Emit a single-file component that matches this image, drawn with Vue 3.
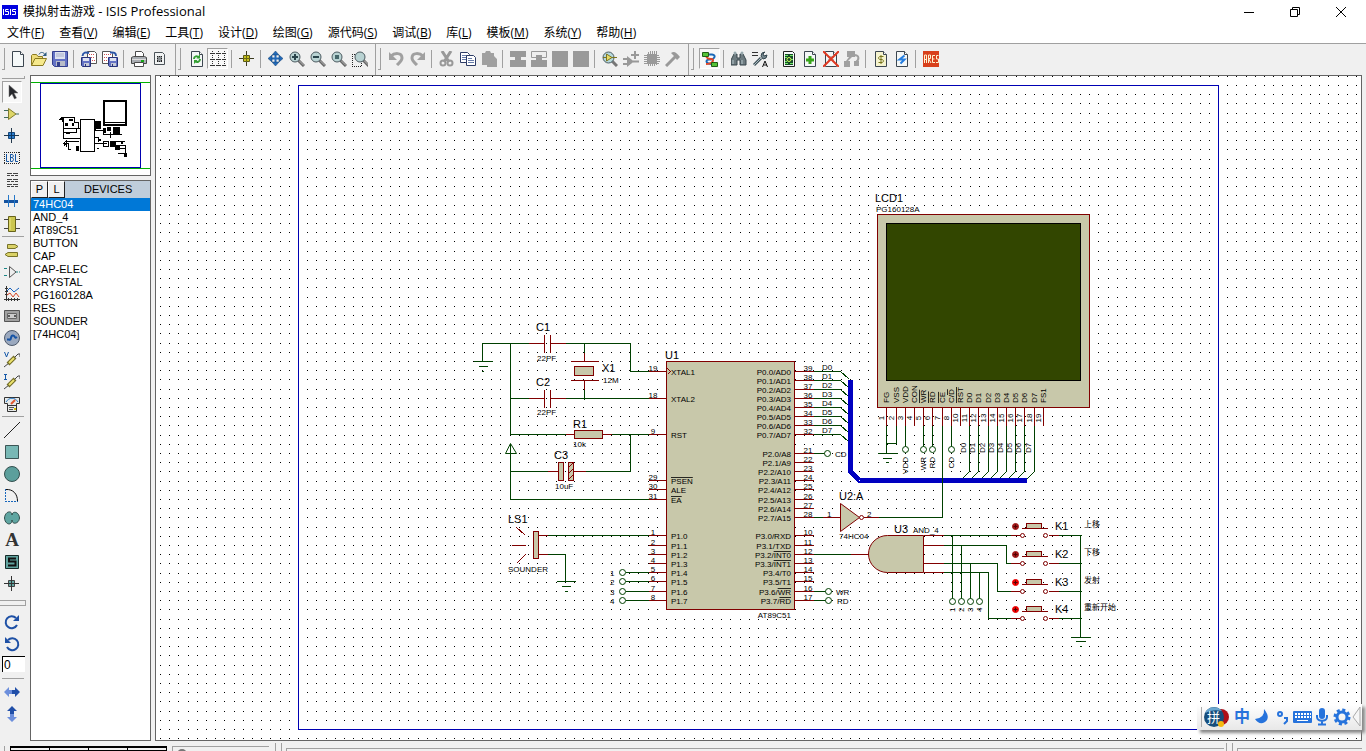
<script setup>
import { ref } from 'vue'

const menus = [
  ['文件', 'F'], ['查看', 'V'], ['编辑', 'E'], ['工具', 'T'], ['设计', 'D'], ['绘图', 'G'],
  ['源代码', 'S'], ['调试', 'B'], ['库', 'L'], ['模板', 'M'], ['系统', 'Y'], ['帮助', 'H'],
]

const lens = (inner) =>
  `<path d="M9.500 9.500L15 15" stroke="#666" stroke-width="3"/><path d="M10 9.500L15 14.500" stroke="#bbb"/><circle cx="6" cy="6" r="5" fill="#b9d3d3" stroke="#4b5a60"/>${inner}`
const sheet = (inner, fill = '#f4f7f7') =>
  `<path d="M2.500.5H10.500L13.500 3.500V15.500H2.500Z" fill="${fill}" stroke="#3c4650"/><path d="M10.500.5V3.500H13.500" fill="#fff" stroke="#3c4650"/>${inner}`
const floppy = (x, y) =>
  `<g transform="translate(${x} ${y})"><path d="M.5.5H9.500V9.500H1.500L.5 8.500Z" fill="#6472c4" stroke="#27327a"/><path d="M2 1H8V4H2Z" fill="#dfe3f2"/><path d="M3 6H8V9H3Z" fill="#c6cad8"/><path d="M4 7H5V9H4Z" fill="#27327a"/></g>`

const icons = {
  new: '<path d="M2.500.5H10.500L13.500 3.500V15.500H2.500Z" fill="#f5f9f9" stroke="#3c4650"/><path d="M10.500.5V3.500H13.500" fill="#fff" stroke="#3c4650"/>',
  open: '<path d="M.5 14.500V4.500L1.500 3.500H5.500L7 5.500H11.500V7.500" fill="#eedc7a" stroke="#8b7a20"/><path d="M.5 14.500L4 7.500H15.500L12 14.500Z" fill="#f6e98c" stroke="#8b7a20"/><path d="M8 3.500C9 1 12 .5 14 3.500" fill="none" stroke="#2c5a80"/><path d="M15.500 1V5H11.500Z" fill="#2c5a80"/>',
  save: '<path d="M.5.5H15.500V15.500H2.500L.5 13.500Z" fill="#6472c4" stroke="#343f8c"/><path d="M3 1H13V8H3Z" fill="#dde2ee"/><path d="M4 3H12M4 5H12" stroke="#a7aecb"/><path d="M4 10H13V15H4Z" fill="#b8bcc8"/><path d="M5 11H8V15H5Z" fill="#343f8c"/>',
  imp: '<path d="M6.500.5H13.500L15.500 2.500V12.500H6.500Z" fill="#fff" stroke="#555"/><path d="M8 3.500H14M8 6.500H14M11 9.500H14" stroke="#d05050" stroke-dasharray="1 1"/><path d="M1.500 5C2 1 5 1 8 2" stroke="#2b55a8" fill="none" stroke-width="2"/>' + floppy(0, 6),
  exp: '<path d="M.5.5H8.500L10.500 2.500V12.500H.5Z" fill="#fff" stroke="#555"/><path d="M2 3.500H9M2 6.500H6M2 9.500H5" stroke="#d05050" stroke-dasharray="1 1"/><path d="M8 1.500C12 1 14 2 14 5" stroke="#2b55a8" fill="none" stroke-width="2"/>' + floppy(6, 6),
  print: '<path d="M4.500 6V.5H10.500L12.500 2.500V6" fill="#fff" stroke="#4a4a4a"/><path d="M.5 6.500L2.500 5.500H13.500L15.500 6.500V12.500H.5Z" fill="#a9adb2" stroke="#4a4a4a"/><path d="M1 8.500H15" stroke="#ddd"/><path d="M3.500 11.500H12.500V15.500H3.500Z" fill="#fff" stroke="#4a4a4a"/><path d="M10 9H13V11H10Z" fill="#15a515"/>',
  area: '<path d="M2.500 1.500H10.500L12.500 3.500V13.500H2.500Z" fill="#f1f3f3" stroke="#4b5258"/><path d="M5 5H10V11H5Z" fill="#8b9094"/><path d="M5 5.500H10M5 10.500H10M5.500 5V11M9.500 5V11" stroke="#222" stroke-dasharray="1 1"/>',
  refresh: sheet('<path d="M5 8C5 5 8 4.500 10 6.500M11 8C11 11 8 12 6 10" fill="none" stroke="#35a035" stroke-width="2"/><path d="M11 3V7.500H7.500ZM5 13V9H8.500Z" fill="#35a035"/>'),
  grid: '<path d="M0 2.500H16M0 8.500H16M0 14.500H16M2.500 0V16M8.500 0V16M14.500 0V16" stroke="#333" stroke-dasharray="1 1"/><path d="M1 2.500H4M7 2.500H10M13 2.500H16M1 8.500H4M7 8.500H10M13 8.500H16M1 14.500H4M7 14.500H10M13 14.500H16" stroke="#333"/>',
  origin: '<path d="M7.500 0V15M0 7.500H15" stroke="#3b3b20"/><path d="M4.500 4.500H10.500V10.500H4.500Z" fill="#c8c31c" stroke="#5b5a17"/><path d="M7.500 4V11M4 7.500H11" stroke="#6d6a13"/>',
  pan: '<path d="M7.500 2V13M2 7.500H13" stroke="#2269b8" stroke-width="2"/><path d="M7.500 0L11 4H4ZM7.500 15L11 11H4ZM0 7.500L4 4V11ZM15 7.500L11 4V11Z" fill="#2269b8" stroke="#17406f" stroke-width=".5"/>',
  zin: lens('<path d="M3 6H9M6 3V9" stroke="#29444b" stroke-width="2"/>'),
  zout: lens('<path d="M3 6H9" stroke="#29444b" stroke-width="2"/>'),
  zall: lens('<path d="M4 4H8V8H4Z" fill="#45676b"/>'),
  zarea: '<path d="M0 3.500H8M.5 3V16M0 15.500H10M9.500 10V16" fill="none" stroke="#222" stroke-dasharray="1 1"/><g transform="translate(2)">' + lens('') + '</g>',
  undo: '<path d="M2 5C5 2 13 1 13 7C13 10 10 12 8 14" fill="none" stroke="#a0a0a0" stroke-width="3"/><path d="M0 1V9H8Z" fill="#a0a0a0"/>',
  redo: '<path d="M13 5C10 2 2 1 2 7C2 10 5 12 7 14" fill="none" stroke="#a0a0a0" stroke-width="3"/><path d="M15 1V9H7Z" fill="#a0a0a0"/>',
  cut: '<path d="M3 0L10 11M12 0L5 11" stroke="#999" stroke-width="3"/><circle cx="4" cy="12" r="2.500" fill="none" stroke="#999" stroke-width="2"/><circle cx="11" cy="12" r="2.500" fill="none" stroke="#999" stroke-width="2"/>',
  copy: '<path d="M.5 1.500H7.500L9.500 3.500V11.500H.5Z" fill="#fff" stroke="#2d3c66"/><path d="M2 4.500H8M2 6.500H8M2 8.500H6" stroke="#667ba9"/><path d="M6.500 4.500H13.500L15.500 6.500V14.500H6.500Z" fill="#fff" stroke="#2d3c66"/><path d="M8 7.500H12M8 9.500H14M8 11.500H14" stroke="#667ba9"/>',
  paste: '<path d="M1 2H4L5 0H9L10 2H13V5L16 8V16H6V14H1Z" fill="#a0a0a0"/>',
  bcopy: '<path d="M0 0H16V6H11V9H16V16H0V9H5V6H0Z" fill="#999"/>',
  bmove: '<path d="M.5.5H15.500V6.500H.5Z" fill="#eee" stroke="#999"/><path d="M5 4H11V9H16V16H0V9H5Z" fill="#999"/>',
  brot: '<path d="M0 0H16V16H0Z" fill="#999"/>',
  bdel: '<path d="M0 0H16V16H0Z" fill="#999"/>',
  pick: '<path d="M10 10L15 15" stroke="#777" stroke-width="3"/><circle cx="6.500" cy="6.500" r="5.500" fill="#b5d8dc" stroke="#4b5a60"/><path d="M4.500 3V10L10 6.500Z" fill="#e8dc64" stroke="#7b7422"/><path d="M1 6.500H4M10 6.500H15" stroke="#7b7422"/>',
  make: '<path d="M4 5V16L11 10.500Z" fill="#999"/><path d="M0 8H5M0 13H5M10 10.500H16M12 0V8M8 4H16" stroke="#999" stroke-width="2"/>',
  pkg: '<path d="M3 3H13V13H3Z" fill="#999"/><path d="M4.500 1V15M6.500 0V15M8.500 0V15M10.500 0V15M12.500 0V14M0 4.500H15M0 6.500H16M0 8.500H16M0 10.500H16M0 12.500H15" stroke="#999"/>',
  decomp: '<path d="M1 15L11 5" stroke="#999" stroke-width="3"/><path d="M6 2C9 0 11 1 15 6L12 9L9 5Z" fill="#999"/>',
  wire: '<path d="M1 3.500H10C15 4 12 9 8 8.500C3 8 3 13 10 13" fill="none" stroke="#1868b8" stroke-width="2"/><path d="M7 3C2 5 5 8 9 8C13 8 11 13 4 13" fill="none" stroke="#e24828" stroke-width="2"/><path d="M.5 1.500H6.500V5.500H.5ZM9.500 11.500H15.500V15.500H9.500Z" fill="#55c338" stroke="#215e16"/>',
  find: '<path d="M3 3H6V7H9V3H12L15 9V14H9V9H6V14H0V9Z" fill="#6d7b80" stroke="#36454a"/><path d="M3 1H5V3H3ZM10 1H12V3H10ZM2 9V13M11 9V13" fill="#36454a" stroke="#b7c8cc"/>',
  prop: '<path d="M0 1.500H6M0 4.500H6" stroke="#333"/><path d="M2 14L9 7" stroke="#42555d" stroke-width="3"/><path d="M2 14L9 7" stroke="#aebdc3"/><path d="M13 1L10 2L9 5L11 8L14 7L15 4L12 5L11 3Z" fill="#778a92" stroke="#34464e"/><path d="M10.500 16L13 10L15.500 16M11.500 14H15" fill="none" stroke="#111"/>',
  design: '<path d="M2.500.5H11.500L13.500 2.500V15.500H2.500Z" fill="#f4f7f7" stroke="#222"/><path d="M4 3H12V14H4Z" fill="#174b28"/><path d="M4 4.500H7M9 4.500H12M4 6.500H6M10 8.500H12M4 10.500H6M9 12.500H12M4 12.500H7" stroke="#6fe565"/><circle cx="8" cy="8.500" r="2" fill="none" stroke="#d4ff58"/>',
  add: sheet('<path d="M8 5V13M4 9H12" stroke="#36a318" stroke-width="3"/>'),
  del: sheet('<path d="M5 6H11M5 9H11" stroke="#777"/><path d="M0 0L16 16M16 0L0 16" stroke="#df3922" stroke-width="2"/>'),
  exit: '<path d="M3 0H11V6H8L4 10H6V16H0V10H2L5 6H3ZM10 10H15V15H10Z" fill="#a0a0a0"/><path d="M10 4C16 4 15 9 12 11" fill="none" stroke="#a0a0a0" stroke-width="2"/>',
  bom: sheet('<path d="M10.500 5.500H7C5 6 5 8 7 8.500H9C11 9 11 11 9 11.500H5.500M8 4V13" fill="none" stroke="#78751c"/>', '#f5f3cf'),
  elec: sheet('<path d="M10.500 4.500L5.500 8.500H10.500L6.500 12.500" fill="none" stroke="#237de0" stroke-width="2"/>'),
  ares: '<path d="M0 0H16V16H0Z" fill="#d8401b"/><path d="M1.500 12V4H3.500V12M1 8.500H4M5.500 12V4H7.500V7.500H5.500L8 12M12 4.500H9.500V11.500H12M9 8H11.500M15.500 4.500H13.500V8H15.500V11.500H13" fill="none" stroke="#fff3d0"/>',
  select: '<path d="M5 1V13L8 10L10.500 15L12.500 14L10 9H14Z" fill="#27282d" stroke="#777" stroke-width=".5"/>',
  gate: '<path d="M0 4.500H4M0 11.500H4M12 8H15" stroke="#3f6b5d"/><path d="M4.500 2.500V13.500L12 8Z" fill="#ddd668" stroke="#807b30"/>',
  junction: '<path d="M7.500 0V15M0 7.500H15" stroke="#24394c"/><path d="M4.500 4.500H10.500V10.500H4.500Z" fill="#2b7fd0" stroke="#16477a"/><path d="M7.500 4V11M4 7.500H11" stroke="#0d3660"/>',
  label: '<path d="M0 2.500H16M0 13.500H16M.5 2V14M15.500 2V14" fill="none" stroke="#222" stroke-dasharray="1 1"/><path d="M2.500 4V11.500H5M6.500 4.500H8.500L9.500 6L8.500 7.500H6.500V4.500V11.500H8.500L9.500 9.500L8.500 7.500M11.500 4V11.500H14" fill="none" stroke="#1557a5"/>',
  script: '<path d="M3 1.500H14M3 7.500H14M3 12.500H14" stroke="#444" stroke-dasharray="5 1"/><path d="M3 3.500H14M3 9.500H14M3 14.500H14" stroke="#444" stroke-dasharray="3 1"/>',
  bus: '<path d="M0 7.500H14" stroke="#1553a0" stroke-width="3"/><path d="M4.500 1V13M10.500 1V13" stroke="#2578c9"/>',
  chip: '<path d="M0 3.500H4M0 12.500H4M12 3.500H16M12 12.500H16" stroke="#444"/><path d="M4.500.5H11.500V15.500H4.500Z" fill="#cbc650" stroke="#67631b"/><path d="M6 2V14" stroke="#eee783"/>',
  term: '<path d="M3.500 2.500H11L14 4.500L11 6.500H3.500ZM13.500 10.500H4L1 12.500L4 14.500H13.500Z" fill="#dad267" stroke="#77722a"/>',
  pin: '<path d="M0 4.500H4M0 11.500H4M11 8H16" stroke="#1a8585" stroke-dasharray="3 1"/><path d="M5.500 2.500V13.500L12 8Z" fill="#eee" stroke="#555"/>',
  graph: '<path d="M2.500 0V15M0 13.500H16M4.500 12V15M7.500 12V15M10.500 12V15M13.500 12V15M1 2.500H4M1 5.500H4M1 8.500H4" stroke="#333"/><path d="M3 5L6 2L10 6L15 2" fill="none" stroke="#1760bd"/><path d="M3 9L6 7L9 11L12 7L15 11" fill="none" stroke="#d34525"/>',
  tape: '<path d="M.5 2.500H15.500V13.500H.5Z" fill="#a1a1a1" stroke="#555"/><path d="M3.500 5.500H12.500V10.500H3.500Z" fill="#ccc" stroke="#666"/><circle cx="5" cy="8" r="1" fill="#333"/><circle cx="11" cy="8" r="1" fill="#333"/>',
  gen: '<circle cx="8" cy="8" r="7.500" fill="#9ba9bf" stroke="#4d596b"/><path d="M3 9.500H5C8 11 6 5 9 5.500C12 6 10 9 13 7" fill="none" stroke="#1553a5" stroke-width="2"/>',
  vprobe: '<path d="M0 15L5 11M11 5L14 2H16V5" fill="none" stroke="#444"/><path d="M4 12L11 5" stroke="#716b25" stroke-width="4"/><path d="M5 11L10 6" stroke="#ece36e" stroke-width="2"/><path d="M.5 0L2.500 5L4.500 0" fill="none" stroke="#1558a8"/>',
  iprobe: '<path d="M0 15L5 11M11 5L14 2H16V5" fill="none" stroke="#444"/><path d="M4 12L11 5" stroke="#716b25" stroke-width="4"/><path d="M5 11L10 6" stroke="#ece36e" stroke-width="2"/><path d="M0 .5H3M1.500 0V5M0 5.500H3" fill="none" stroke="#1558a8"/>',
  meter: '<path d="M.5 1.500H15.500V7.500H12.500V15.500H3.500V7.500H.5Z" fill="#e6e9e9" stroke="#333"/><path d="M2 6C5 1 11 1 14 6" fill="none" stroke="#2879c5"/><path d="M3 9.500H13" stroke="#333"/><path d="M7 8L11 4" stroke="#e15a31" stroke-width="2"/><path d="M5 11.500H10M5 13.500H9" stroke="#555"/><path d="M10 12H12V14H10Z" fill="#d3bf00"/>',
  line: '<path d="M0 16L16 0" stroke="#222"/>',
  box: '<path d="M1.500 1.500H14.500V14.500H1.500Z" fill="#78b8b5" stroke="#3c5555"/>',
  circle: '<circle cx="8" cy="8" r="7.500" fill="#5c9f9c" stroke="#334f4e"/>',
  arc: '<path d="M1.500 1V14M1 13.500H14" fill="none" stroke="#1766bc" stroke-dasharray="2 1"/><path d="M2 1.500C9 1 13.500 6 13.500 13" fill="none" stroke="#111"/>',
  path: '<path d="M8 5C8 0 1 1 .5 8C1 15 8 16 8 10C8 15 15 14 15.500 8C15 1 8 1 8 5Z" fill="#5fa5a1" stroke="#304d4b"/>',
  symbol: '<path d="M1.500 1.500H14.500V14.500H1.500Z" fill="#61a39f" stroke="#152a29"/><path d="M12 4.500H5V7.500H11.500V11.500H4" fill="none" stroke="#111" stroke-width="2"/>',
  marker: '<path d="M7.500 0V15M0 7.500H15" stroke="#333"/><path d="M4.500 4.500H10.500V10.500H4.500Z" fill="#65a9a5" stroke="#444"/><path d="M7.500 4V11M4 7.500H11" stroke="#333"/>',
  cw: '<path d="M12 4A6 6 0 1 0 13 11" fill="none" stroke="#1e50a5" stroke-width="2"/><path d="M15 1V7H9Z" fill="#1e50a5"/>',
  ccw: '<path d="M4 4A6 6 0 1 1 3 11" fill="none" stroke="#1e50a5" stroke-width="2"/><path d="M1 1V7H7Z" fill="#1e50a5"/>',
  fliph: '<path d="M0 8L5 3V6H8V10H5V13Z" fill="#6d8fdc"/><path d="M16 8L11 3V6H8V10H11V13Z" fill="#214fa8"/>',
  flipv: '<path d="M8 0L3 5H6V8H10V5H13Z" fill="#214fa8"/><path d="M8 16L3 11H6V8H10V11H13Z" fill="#6d8fdc"/>',
}

const bars = [
  ['new', 'open', 'save', '|', 'imp', 'exp', '|', 'print', 'area'],
  ['refresh', 'grid', '|', 'origin', '|', 'pan', 'zin', 'zout', 'zall', 'zarea'],
  ['undo', 'redo', '|', 'cut', 'copy', 'paste', '|', 'bcopy', 'bmove', 'brot', 'bdel', '|', 'pick', 'make', 'pkg', 'decomp'],
  ['wire', '|', 'find', 'prop', '|', 'design', 'add', 'del', 'exit', '|', 'bom', 'elec', '|', 'ares'],
]
const modes = [
  ['select', 'gate', 'junction', 'label', 'script', 'bus', 'chip'],
  ['term', 'pin', 'graph', 'tape', 'gen', 'vprobe', 'iprobe', 'meter'],
  ['line', 'box', 'circle', 'arc', 'path', 'text', 'symbol', 'marker'],
]
const pressed = ['grid', 'wire', 'select']

const devices = ['74HC04', 'AND_4', 'AT89C51', 'BUTTON', 'CAP', 'CAP-ELEC', 'CRYSTAL', 'PG160128A', 'RES', 'SOUNDER', '[74HC04]']
const chosen = ref('74HC04')
const angle = ref('0')

// Sheet grid: one dot every tenth of an inch, snapped to whole pixels.
const pitch = 9.2
let dots = ''
for (let r = -1; r < 130; r++) {
  for (let c = -15; c < 260; c++) dots += `M${Math.round(298 + c * pitch)} ${Math.round(85 + r * pitch)}h1v1h-1z`
}

const leftPins = [
  [19, 371, 'XTAL1'], [18, 398, 'XTAL2'], [9, 434, 'RST'], [29, 480, 'PSEN', 1], [30, 489, 'ALE'], [31, 499, 'EA', 1],
  [1, 535, 'P1.0'], [2, 545, 'P1.1'], [3, 554, 'P1.2'], [4, 563, 'P1.3'], [5, 572, 'P1.4'], [6, 581, 'P1.5'], [7, 591, 'P1.6'], [8, 600, 'P1.7'],
]
const rightPins = [
  [39, 371, 'P0.0/AD0'], [38, 380, 'P0.1/AD1'], [37, 389, 'P0.2/AD2'], [36, 398, 'P0.3/AD3'],
  [35, 407, 'P0.4/AD4'], [34, 416, 'P0.5/AD5'], [33, 425, 'P0.6/AD6'], [32, 434, 'P0.7/AD7'],
  [21, 453, 'P2.0/A8'], [22, 462, 'P2.1/A9'], [23, 471, 'P2.2/A10'], [24, 480, 'P2.3/A11'],
  [25, 489, 'P2.4/A12'], [26, 499, 'P2.5/A13'], [27, 508, 'P2.6/A14'], [28, 517, 'P2.7/A15'],
  [10, 535, 'P3.0/RXD'], [11, 545, 'P3.1/TXD'], [12, 554, 'P3.2/', 'INT0'], [13, 563, 'P3.3/', 'INT1'],
  [14, 572, 'P3.4/T0'], [15, 581, 'P3.5/T1'], [16, 591, 'P3.6/', 'WR'], [17, 600, 'P3.7/', 'RD'],
]
const lcdPins = [
  [1, 886, 'FG'], [2, 896, 'VSS'], [3, 905, 'VDD'], [4, 914, 'CON'], [5, 923, '', 'WR'], [6, 932, '', 'RD'],
  [7, 942, '', 'CE'], [8, 951, 'C/', 'D'], [10, 960, '', 'RST'], [11, 969, 'D0'], [12, 978, 'D1'], [13, 988, 'D2'],
  [14, 997, 'D3'], [15, 1006, 'D4'], [16, 1015, 'D5'], [17, 1024, 'D6'], [18, 1034, 'D7'], [19, 1043, 'FS1'],
]
const lcdNets = [[905, 'VDD'], [923, 'WR'], [932, 'RD'], [951, 'CD']]
const ports = [572, 581, 591, 600]
const taps = [[952, 534], [961, 544], [970, 562], [979, 571]]
const keys = [
  ['K1', 535, '上移', '#a01818'], ['K2', 563, '下移', '#a01818'],
  ['K3', 591, '发射', '#f00000'], ['K4', 618, '重新开始', '#f00000'],
]
</script>

<template>
  <div class="app">
    <header class="title">
      <svg class="logo" width="16" height="14" viewBox="0 0 16 14">
        <path d="M0 0H16V14H0Z" fill="#0000e0" />
        <path d="M1.500 4V10M6.500 4.500H3.500V6.500H6.500V9.500H3M8.500 4V10M14 4.500H10.500V6.500H13.500V9.500H10" fill="none" stroke="#fff" />
      </svg>
      <h1>模拟射击游戏 <span>- ISIS Professional</span></h1>
      <div class="winbtns">
        <button aria-label="最小化"><svg width="12" height="12"><path d="M1 6.500H11" stroke="#000" /></svg></button>
        <button aria-label="还原"><svg width="12" height="12"><path d="M1.500 3.500H8.500V10.500H1.500ZM3.500 3V1.500H10.500V8.500H9" fill="none" stroke="#000" /></svg></button>
        <button aria-label="关闭"><svg width="12" height="12"><path d="M1 1L11 11M11 1L1 11" stroke="#000" /></svg></button>
      </div>
    </header>

    <nav class="menu">
      <button v-for="m in menus" :key="m[1]">{{ m[0] }}(<u>{{ m[1] }}</u>)</button>
    </nav>

    <div class="tools">
      <div v-for="(bar, b) in bars" :key="b" class="bar">
        <i class="grip"></i>
        <template v-for="(t, i) in bar" :key="i">
          <i v-if="t === '|'" class="sep"></i>
          <button v-else :class="{ down: pressed.includes(t) }" :aria-label="t">
            <svg width="16" height="16" viewBox="0 0 16 16" v-html="icons[t]"></svg>
          </button>
        </template>
      </div>
    </div>

    <main class="work">
      <aside class="rail">
        <i class="hgrip"></i>
        <div v-for="(g, k) in modes" :key="k" class="modes">
          <button v-for="t in g" :key="t" :class="{ down: pressed.includes(t) }" :aria-label="t">
            <b v-if="t === 'text'">A</b>
            <svg v-else width="16" height="16" viewBox="0 0 16 16" v-html="icons[t]"></svg>
          </button>
        </div>
        <i class="hgrip low"></i>
        <div class="modes turn">
          <button v-for="t in ['cw', 'ccw']" :key="t" :aria-label="t"><svg width="16" height="16" viewBox="0 0 16 16" v-html="icons[t]"></svg></button>
          <input v-model="angle" aria-label="角度" />
        </div>
        <div class="modes">
          <button v-for="t in ['fliph', 'flipv']" :key="t" :aria-label="t"><svg width="16" height="16" viewBox="0 0 16 16" v-html="icons[t]"></svg></button>
        </div>
      </aside>

      <section class="side">
        <div class="overview">
          <svg width="119" height="99" viewBox="31 76 119 99" shape-rendering="crispEdges">
            <g fill="none">
              <path d="M31 82.500H150M31 168.500H150" stroke="#00b000" />
              <path d="M40.500 83.500H140.500V167.500H40.500Z" stroke="#0000b0" />
              <path d="M104 101H126V125H104Z" stroke="#000" stroke-width="2" />
              <path d="M104 122.500H126" stroke="#000" />
              <path d="M80.500 119.500H94.500V151.500H80.500Z" stroke="#000" />
              <path d="M59 119.500H62V122M61 117.500H74V122H79M63.500 118V139M63 128.500H78V123M64 132.500H76V128H80M64 138.500H80M65 141.500H79M63 143.500H68V149H71M66 140V147M95 137.500H99M95 130H103V134.500H122M110 132V138M95 121V131M95 143.500H107M97 148H99" stroke="#000" />
              <path d="M103.500 141.500H108.500V146.500H103.500ZM110 141H118V142M113 145H125V155M117 141.500H125M117 148H125M118 153.500H126V156" stroke="#000" />
            </g>
            <path d="M60 118H63V120H60ZM65 123H68V126H65ZM69 119H73V121H69ZM72 123H74V126H72ZM66 132H70V134H66ZM76 146H79V151H76ZM95 121H101V129H95ZM103 128H106V133H103ZM107 127H111V131H107ZM113 127H120V134H113ZM98 138L102 140L98 142ZM110 142H116V147H110ZM115 145H120V150H115ZM121 142H123V144H121ZM64 142L68 144L64 146ZM124 154H127V157H124Z" />
          </svg>
        </div>
        <div class="devices">
          <div class="dhead"><button>P</button><button>L</button><span>DEVICES</span></div>
          <ul>
            <li v-for="d in devices" :key="d"><button :class="{ on: d === chosen }" @click="chosen = d">{{ d }}</button></li>
          </ul>
        </div>
      </section>

      <section class="sheet">
        <svg width="100%" height="100%">
          <g transform="translate(-156 -76)">
            <path :d="dots" shape-rendering="crispEdges" />
            <g transform="translate(0.5 0.5)" shape-rendering="crispEdges" fill="none">
              <path d="M298 85H1218V729H298Z" stroke="#0000b4" />

              <g stroke="#004000">
                <path d="M482 361V343H528M565 343H630V371H648M510 342V434H565M611 434H648M510 398H528M565 398H648M584 342V352M584 389V399M630 433V471H585M547 471H510M510 443V499H648M547 535H648M547 554H565V581" />
                <path d="M473 361H492M478 366H487M481 371H483M556 581H575M561 586H570M564 591H567" />
                <path v-for="y in ports" :key="y" :d="`M625 ${y}H648`" />
                <path v-for="p in rightPins.slice(0, 8)" :key="p[0]" :d="`M813 ${p[1]}H840L849 ${p[1] + 8}`" />
                <path d="M813 453H824M813 591H825M813 600H825M813 554H850M813 517H822M878 517H942V425" />
                <path d="M886 425V453M896 425V443H886M877 453H897M882 458H891M885 462H888" />
                <path v-for="n in lcdNets" :key="n[0]" :d="`M${n[0]} 425V446`" />
                <path v-for="p in lcdPins.slice(9, 17)" :key="p[0]" :d="`M${p[1]} 425V471L${p[1] - 8} 479`" />
                <path d="M943 535H1010M943 545H1006V563H1012M943 563H997V591H1012M943 572H988V618H1012" />
                <path v-for="t in taps" :key="t[0]" :d="`M${t[0]} ${t[1]}V598`" />
                <path v-for="k in keys" :key="k[0]" :d="`M1058 ${k[1]}H1081`" />
                <path d="M1080 535V637M1070 637H1090M1075 641H1085M1079 646H1081" />
              </g>

              <g stroke="#800000">
                <path d="M528 343H544M550 343H565M544 334V352M550 334V352M528 398H544M550 398H565M544 389V407M550 389V407M584 352V361M570 361H598M570 380H598M584 380V389M565 434H574M602 434H611M547 471H558M573 471H585M538 535H547M538 554H547M511 545H525M516 527L525 535M516 563L525 554" />
                <path d="M574 366H593V375H574ZM574 430H602V438H574ZM558 462H563V480H558ZM568 462H573V480H568ZM533 531H538V558H533Z" fill="#c8c8aa" />
                <path d="M568 467L573 462M568 473L573 468M568 479L573 474" />
                <path d="M666 361H794V609H666Z" fill="#c8c8aa" />
                <path d="M667 368L670 371L667 374" />
                <path v-for="p in leftPins" :key="p[0]" :d="`M648 ${p[1]}H666`" />
                <path v-for="p in rightPins" :key="p[0]" :d="`M794 ${p[1]}H813`" />
                <path d="M822 517H840M863 517H878M850 554H868M923 535H943M923 545H943M923 563H943M923 572H943" />
                <path d="M877 214H1089V407H877Z" fill="#c8c8aa" />
                <path v-for="p in lcdPins" :key="p[0]" :d="`M${p[1]} 407V425`" />
                <path v-for="k in keys" :key="k[0]" :d="`M1010 ${k[1]}H1020M1048 ${k[1]}H1058M1021 ${k[1] - 7}H1047`" />
                <path v-for="k in keys" :key="k[0] + 'c'" :d="`M1026 ${k[1] - 12}H1041V${k[1] - 7}H1026Z`" fill="#c8c8aa" />
              </g>
              <path d="M886 223H1080V380H886Z" fill="#324600" stroke="#000" />
              <path d="M850 379V471L859 480H1026" stroke="#0000c0" stroke-width="5" />
              <path d="M942 475V485" stroke="#004000" />
            </g>

            <g transform="translate(0.5 0.5)" fill="none" stroke="#800000">
              <path d="M840 503V531L859 517Z" fill="#c8c8aa" />
              <circle cx="861" cy="517" r="2" fill="#fff" />
              <path d="M923 535H887A19 18.500 0 0 0 887 572H923Z" fill="#c8c8aa" />
              <g v-for="k in keys" :key="k[0]">
                <circle cx="1022" :cy="k[1]" r="2" fill="#fff" />
                <circle cx="1045" :cy="k[1]" r="2" fill="#fff" />
                <circle cx="1015" :cy="k[1] - 9" r="3" :fill="k[3]" :stroke="k[3]" />
                <path :d="`M1015 ${k[1] - 11}v4m-2 -2h4`" stroke="#500000" />
              </g>
              <g stroke="#004000">
                <path d="M510 443L505 453H516Z" />
                <circle v-for="y in ports" :key="y" cx="622" :cy="y" r="3" fill="#fff" />
                <circle cx="827" cy="453" r="3" fill="#fff" />
                <circle cx="828" cy="591" r="3" fill="#fff" />
                <circle cx="828" cy="600" r="3" fill="#fff" />
                <circle v-for="n in lcdNets" :key="n[0]" :cx="n[0]" cy="449" r="3" fill="#fff" />
                <circle v-for="t in taps" :key="t[0]" :cx="t[0]" cy="601" r="3" fill="#fff" />
              </g>
            </g>

            <g class="small">
              <template v-for="p in leftPins" :key="p[0]">
                <text x="653" :y="p[1]" text-anchor="middle">{{ p[0] }}</text>
                <text x="671" :y="p[1] + 4" :class="{ over: p[3] }">{{ p[2] }}</text>
              </template>
              <template v-for="p in rightPins" :key="p[0]">
                <text x="808" :y="p[1]" text-anchor="middle">{{ p[0] }}</text>
                <text x="791" :y="p[1] + 4" text-anchor="end">{{ p[2] }}<tspan class="over">{{ p[3] }}</tspan></text>
              </template>
              <text v-for="(p, i) in rightPins.slice(0, 8)" :key="i" x="822" :y="p[1] - 1">D{{ i }}</text>
              <text v-for="(y, i) in ports" :key="y" x="610" :y="y + 4">{{ i + 1 }}</text>
              <template v-for="p in lcdPins" :key="p[0]">
                <text :transform="`translate(${p[1] + 3} 403) rotate(-90)`">{{ p[2] }}<tspan class="over">{{ p[3] }}</tspan></text>
                <text :transform="`translate(${p[1] - 2} 418) rotate(-90)`" text-anchor="middle">{{ p[0] }}</text>
              </template>
              <text v-for="n in lcdNets" :key="n[0]" :transform="`translate(${n[0] + 3} 457) rotate(-90)`" text-anchor="end">{{ n[1] }}</text>
              <text v-for="(p, i) in lcdPins.slice(9, 17)" :key="i" :transform="`translate(${p[1] - 3} 453) rotate(-90)`">D{{ i }}</text>
              <text v-for="(t, i) in taps" :key="i" :transform="`translate(${t[0] + 3} 612) rotate(-90)`">{{ i + 1 }}</text>
              <text x="537" y="361">22PF</text>
              <text x="603" y="383">12M</text>
              <text x="537" y="415">22PF</text>
              <text x="573" y="447">10k</text>
              <text x="555" y="489">10uF</text>
              <text x="508" y="572">SOUNDER</text>
              <text x="791" y="618" text-anchor="end">AT89C51</text>
              <text x="835" y="457">CD</text>
              <text x="836" y="595">WR</text>
              <text x="837" y="604">RD</text>
              <text x="827" y="517">1</text>
              <text x="867" y="517">2</text>
              <text x="839" y="539">74HC04</text>
              <text x="913" y="533">AND_4</text>
              <text x="876" y="212">PG160128A</text>
              <text v-for="k in keys" :key="k[0]" x="1084" :y="k[1] - 8">{{ k[2] }}</text>
            </g>
            <g class="big">
              <text x="536" y="331">C1</text>
              <text x="602" y="372">X1</text>
              <text x="536" y="386">C2</text>
              <text x="573" y="428">R1</text>
              <text x="554" y="459">C3</text>
              <text x="508" y="523">LS1</text>
              <text x="665" y="359">U1</text>
              <text x="839" y="500">U2:A</text>
              <text x="894" y="533">U3</text>
              <text x="875" y="202">LCD1</text>
              <text v-for="k in keys" :key="k[0]" x="1055" :y="k[1] - 5">{{ k[0] }}</text>
            </g>
          </g>
        </svg>
      </section>
    </main>

    <footer class="status">
      <i class="grip"></i>
      <div class="play"><button aria-label="运行"></button><button aria-label="单步"></button><button aria-label="暂停"></button><button aria-label="停止"></button></div>
      <div class="msg"><i></i></div>
      <i class="split"></i>
      <div class="line"></div>
      <i class="split"></i>
      <div class="line end"></div>
    </footer>

    <div class="ime">
      <i class="imegrip"></i>
      <svg width="158" height="26" viewBox="1204 704 158 26">
        <circle cx="1221" cy="717" r="8" fill="#b01018" />
        <circle cx="1214" cy="717" r="10" fill="#174e7c" />
        <path d="M1205 713A10 10 0 0 1 1222 711Q1212 709 1205 713Z" fill="#6ba6cf" />
        <circle cx="1221" cy="724" r="3" fill="#f5b910" />
        <text x="1207" y="722" font-size="13" fill="#fff">拼</text>
        <text x="1234" y="722" font-size="16" font-weight="700" fill="#2673dc">中</text>
        <path d="M1264 709Q1265 718 1255 719Q1258 724 1263 723Q1272 719 1264 709Z" fill="#2673dc" />
        <circle cx="1280" cy="714" r="2" fill="none" stroke="#2673dc" stroke-width="2" />
        <path d="M1284 718H1287V721L1284 724" fill="none" stroke="#2673dc" stroke-width="2" />
        <rect x="1293" y="711" width="19" height="12" rx="1" fill="#2673dc" />
        <path d="M1295 714H1311M1295 717H1311" stroke="#fff" stroke-width="2" stroke-dasharray="2 1" />
        <path d="M1297 720.500H1308" stroke="#fff" />
        <rect x="1319" y="708" width="6" height="11" rx="3" fill="#2673dc" />
        <path d="M1317 715V717C1317 722 1327 722 1327 717V715M1322 721V724M1318 724.500H1326" fill="none" stroke="#2673dc" stroke-width="2" />
        <circle cx="1342" cy="717" r="5" fill="none" stroke="#2673dc" stroke-width="3" />
        <circle cx="1342" cy="717" r="7" fill="none" stroke="#2673dc" stroke-width="3" stroke-dasharray="3 2.500" />
        <path d="M1360 707V726L1353 717Z" fill="#f6f6f6" stroke="#aaa" />
      </svg>
    </div>
  </div>
</template>

<style>
html, body { height: 100%; overflow: hidden; }
</style>

<style scoped>
.app {
  position: relative;
  display: flex;
  flex-direction: column;
  height: 100vh;
  background: #f0f0f0;
  color: #000;
  font: 12px/16px "Open Sans", "Noto Sans CJK SC", sans-serif;
}
.app * { box-sizing: border-box; }
button { margin: 0; padding: 0; border: 0; background: none; color: inherit; font: inherit; }
svg { display: block; flex: none; }

.title { display: flex; align-items: center; height: 23px; padding-left: 2px; background: #fff; }
.title h1 { flex: 1; margin: 0 0 0 5px; font-size: 12px; font-weight: 400; }
.title span { font-size: 13px; }
.winbtns { display: flex; padding-right: 2px; }
.winbtns button { display: flex; align-items: center; justify-content: center; width: 46px; height: 20px; }

.menu { display: flex; gap: 15px; height: 20px; padding-left: 7px; background: #fff; }
.menu button { line-height: 20px; white-space: nowrap; }

.tools { display: flex; height: 32px; border-top: 1px solid #a0a0a0; }
.bar { display: flex; align-items: center; padding: 0 5px 2px 0; border-right: 1px solid #a0a0a0; }
.bar:last-child { border-right: 0; }
.bar button { display: flex; align-items: center; justify-content: center; width: 21px; height: 21px; }
.down { border: 1px solid; border-color: #a0a0a0 #fff #fff #a0a0a0; background: #f8f8f8; }
.grip { width: 3px; height: 22px; margin: 0 5px 0 2px; border: solid #a0a0a0; border-width: 0 1px 1px 0; }
.bar:first-child .grip { margin-right: 2px; }
.sep { width: 1px; height: 18px; margin: 0 4px 0 3px; background: #a0a0a0; }

.work { display: flex; flex: 1; min-height: 0; }
.rail { width: 30px; flex: none; }
.hgrip { display: block; width: 23px; height: 3px; margin: 1px 0 2px 2px; border: solid #a0a0a0; border-width: 0 1px 1px 0; }
.modes { width: 20px; margin-left: 2px; }
.modes + .modes { border-top: 1px solid #a0a0a0; margin-top: 1px; padding-top: 2px; width: 22px; }
.modes button { display: flex; align-items: center; justify-content: center; width: 20px; height: 22px; }
.modes b { font: 700 19px/22px "Liberation Serif", serif; color: #333; }
.low { width: 26px; height: 6px; margin: 5px 0 5px 0; border-top-width: 1px; }
.modes input { display: block; width: 23px; height: 16px; margin-top: 1px; padding: 0 1px; border: solid #000; border-width: 1px 0 0 1px; background: #fff; font: 12px/14px "Liberation Sans", sans-serif; }
.turn + .modes { margin-top: 6px; }

.side { display: flex; flex-direction: column; gap: 4px; width: 121px; flex: none; padding-bottom: 2px; font: 11px/13px "Liberation Sans", sans-serif; }
.overview { border: 1px solid #646464; background: #fff; }
.devices { flex: 1; border: 1px solid #646464; background: #fff; }
.dhead { display: flex; height: 17px; background: #bfcddb; }
.dhead button { width: 17px; border: 1px solid; border-color: #fff #222 #222 #fff; background: #f0f0f0; }
.dhead span { flex: 1; padding-left: 19px; line-height: 17px; }
.devices ul { margin: 0; padding: 0; list-style: none; }
.devices li button { display: block; width: 100%; height: 13px; padding-left: 2px; text-align: left; }
.devices .on { background: #0078d7; color: #fff; }

.sheet { flex: 1; min-width: 0; margin: 0 4px 2px 4px; border: 1px solid #646464; background: #fff; overflow: hidden; }
.small { font: 8px "Liberation Sans", "Noto Sans CJK SC", sans-serif; }
.big { font: 11px "Liberation Sans", sans-serif; }
.over { text-decoration: overline; }

.status { display: flex; height: 8px; padding-top: 3px; overflow: hidden; }
.status .grip { margin: 0 5px 0 2px; }
.play { display: flex; width: 157px; border: 1px solid #000; border-top-width: 2px; }
.play button { flex: 1; border-right: 1px solid #000; }
.play button:last-child { border-right: 0; }
.msg { width: 97px; margin: 0 6px 0 5px; border: solid #a0a0a0; border-width: 1px 0 0 1px; }
.msg i { display: block; width: 10px; height: 10px; margin: 2px 0 0 4px; border-radius: 5px; background: #777; }
.split { width: 7px; margin-top: -3px; height: 12px; border: solid #a0a0a0; border-width: 0 1px; }
.line { flex: 1; margin: 2px 2px 0 4px; border: solid #a0a0a0; border-width: 1px 0 0 1px; }
.end { flex: none; width: 125px; margin-right: 4px; }

.ime {
  position: absolute;
  right: 4px;
  bottom: 21px;
  display: flex;
  align-items: center;
  width: 165px;
  height: 26px;
  background: linear-gradient(#fff, #e8e8e8);
  box-shadow: 3px 3px 3px #888;
  font-family: "Noto Sans CJK SC", sans-serif;
}
.imegrip { width: 1px; height: 20px; margin: 0 2px 0 4px; background: #aaa; }
</style>
